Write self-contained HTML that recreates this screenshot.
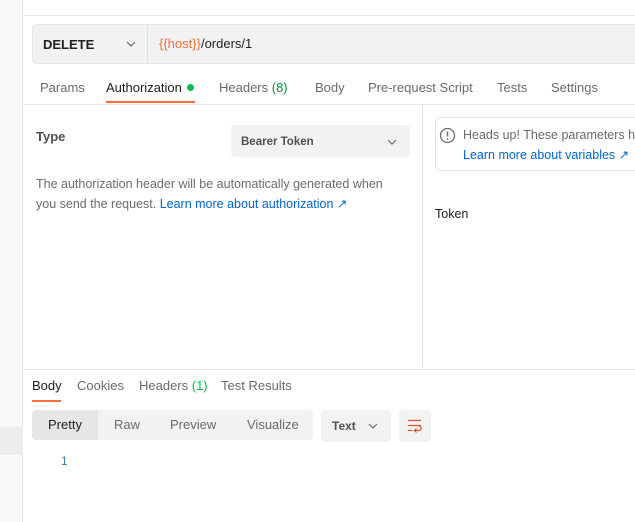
<!DOCTYPE html>
<html><head><style>
*{margin:0;padding:0;box-sizing:border-box}
body{width:635px;height:522px;overflow:hidden;background:#fff;font-family:"Liberation Sans",sans-serif;font-size:13px;color:#212121;position:relative}
.a{position:absolute;white-space:nowrap}
.g{color:#6b6b6b}
.blue{color:#0265d2}
</style></head><body>
<div class="a" style="left:0;top:0;width:23px;height:522px;background:#f9f9f9;border-right:1px solid #e6e6e6"></div>
<div class="a" style="left:0;top:427px;width:23px;height:28px;background:#ededed"></div>
<div class="a" style="left:24px;top:15px;width:611px;height:1px;background:#e6e6e6"></div>
<div class="a" style="left:32px;top:24px;width:610px;height:40px;background:#f2f2f2;border:1px solid #e6e6e6;border-radius:4px"></div>
<div class="a" style="left:147px;top:25px;width:1px;height:38px;background:#e0e0e0"></div>
<div class="a" style="left:43px;top:37px;font-weight:bold;font-size:13px">DELETE</div>
<svg class="a" style="left:126px;top:41px" width="10" height="6"><path d="M1 1l4 4 4-4" fill="none" stroke="#6b6b6b" stroke-width="1.2"/></svg>
<div class="a" style="left:159px;top:36px;font-size:13px"><span style="color:#f26b3a">{{host}}</span>/orders/1</div>
<div class="a g" style="left:40px;top:80px">Params</div>
<div class="a" style="left:106px;top:80px">Authorization</div>
<div class="a" style="left:187px;top:84px;width:7px;height:7px;border-radius:50%;background:#0cbb52"></div>
<div class="a" style="left:106px;top:101px;width:89px;height:2px;background:#ff6c37"></div>
<div class="a g" style="left:219px;top:80px">Headers <span style="color:#0a8f3f">(8)</span></div>
<div class="a g" style="left:315px;top:80px">Body</div>
<div class="a g" style="left:368px;top:80px">Pre-request Script</div>
<div class="a g" style="left:497px;top:80px">Tests</div>
<div class="a g" style="left:551px;top:80px">Settings</div>
<div class="a" style="left:24px;top:104px;width:611px;height:1px;background:#e6e6e6"></div>
<div class="a" style="left:422px;top:105px;width:1px;height:264px;background:#e6e6e6"></div>
<div class="a" style="left:36px;top:129px;font-weight:bold;color:#505050">Type</div>
<div class="a" style="left:231px;top:125px;width:179px;height:32px;background:#f2f2f2;border-radius:4px"></div>
<div class="a" style="left:241px;top:136px;font-weight:bold;font-size:11.5px;color:#505050">Bearer Token</div>
<svg class="a" style="left:387px;top:139px" width="10" height="6"><path d="M1 1l4 4 4-4" fill="none" stroke="#6b6b6b" stroke-width="1.2"/></svg>
<div class="a g" style="left:36px;top:174px;font-size:12.5px;line-height:20px">The authorization header will be automatically generated when<br>you send the request. <span class="blue">Learn more about authorization ↗</span></div>
<div class="a" style="left:435px;top:117px;width:210px;height:54px;border:1px solid #e6e6e6;border-radius:4px"></div>
<svg class="a" style="left:439px;top:127px" width="17" height="17"><circle cx="8.5" cy="8.5" r="7" fill="none" stroke="#6b6b6b" stroke-width="1.3"/><path d="M8.5 4.5v5" stroke="#6b6b6b" stroke-width="1.5"/><circle cx="8.5" cy="12" r="0.9" fill="#6b6b6b"/></svg>
<div class="a g" style="left:463px;top:128px;font-size:12.5px">Heads up! These parameters h</div>
<div class="a blue" style="left:463px;top:147px;font-size:12.5px">Learn more about variables ↗</div>
<div class="a" style="left:435px;top:207px;font-size:12.5px">Token</div>
<div class="a" style="left:24px;top:369px;width:611px;height:1px;background:#e6e6e6"></div>
<div class="a" style="left:32px;top:378px">Body</div>
<div class="a" style="left:32px;top:400px;width:29px;height:2px;background:#ff6c37"></div>
<div class="a g" style="left:77px;top:378px">Cookies</div>
<div class="a g" style="left:139px;top:378px">Headers <span style="color:#0cbb52">(1)</span></div>
<div class="a g" style="left:221px;top:378px">Test Results</div>
<div class="a" style="left:32px;top:410px;width:281px;height:30px;background:#f2f2f2;border-radius:4px"></div>
<div class="a" style="left:32px;top:410px;width:66px;height:30px;background:#e6e6e6;border-radius:4px 0 0 4px"></div>
<div class="a" style="left:48px;top:417px">Pretty</div>
<div class="a g" style="left:114px;top:417px">Raw</div>
<div class="a g" style="left:170px;top:417px">Preview</div>
<div class="a g" style="left:247px;top:417px">Visualize</div>
<div class="a" style="left:321px;top:410px;width:70px;height:32px;background:#f2f2f2;border-radius:4px"></div>
<div class="a" style="left:332px;top:419px;font-weight:bold;font-size:12px;color:#505050">Text</div>
<svg class="a" style="left:368px;top:423px" width="10" height="6"><path d="M1 1l4 4 4-4" fill="none" stroke="#6b6b6b" stroke-width="1.2"/></svg>
<div class="a" style="left:399px;top:410px;width:32px;height:32px;background:#f2f2f2;border-radius:4px"></div>
<svg class="a" style="left:407px;top:419px" width="16" height="14"><path d="M1 1.5h13M1 6.5h13M1 11.5h4" fill="none" stroke="#e2542c" stroke-width="1.2"/><path d="M8 11.5h4a2.2 2.2 0 0 0 0-4.4" fill="none" stroke="#e2542c" stroke-width="1.2"/><path d="M9.5 9.5l-2 2 2 2" fill="none" stroke="#e2542c" stroke-width="1.2"/></svg>
<div class="a" style="left:61px;top:454px;font-size:12px;color:#3a7ea6">1</div>
</body></html>
